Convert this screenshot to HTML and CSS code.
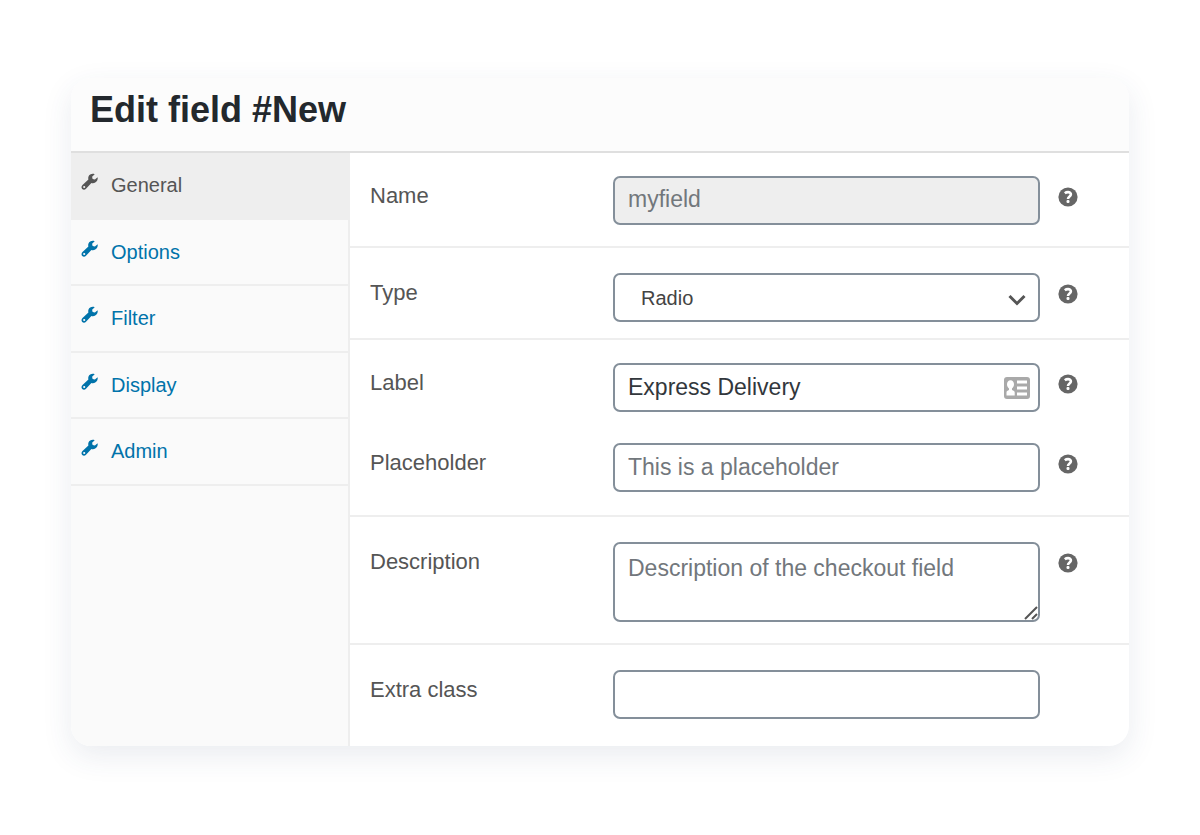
FILE: index.html
```html
<!DOCTYPE html>
<html lang="en">

<head>
    <meta charset="UTF-8">
    <meta name="viewport" content="width=device-width, initial-scale=1.0">
    <title>Edit field #New</title>
    <link rel="stylesheet" href="styles.css">
</head>

<body>
    <!-- shared icons -->
    <svg class="icon-defs" width="0" height="0" aria-hidden="true">
        <symbol id="icon-wrench" viewBox="0 0 18 18">
            <path fill-rule="evenodd" d="M16.600 4.200l-2.700 2.300-2.300-.6-.5-2.200 2.600-2.500C11.200.3 8.400 1.300 7.500 3.600c-.4 1-.4 2-.1 3L1.500 12C.3 13.100.2 14.900 1.200 15.900s2.700 1 3.800-.2l5.400-5.800c1.200.4 2.600.3 3.800-.4 2-1.100 2.900-3.300 2.400-5.300zM3.200 12.900a1.100 1.100 0 1 1 0 2.200 1.100 1.100 0 0 1 0-2.200z" />
        </symbol>
        <symbol id="icon-help" viewBox="0 0 20 20">
            <circle cx="10" cy="10" r="9.600" />
            <path fill="none" stroke="#fff" stroke-width="2.600" d="M6.800 6.200c1-.8 2.100-1.100 3.200-1.100 1.800 0 2.900.8 2.900 2.200 0 2.200-2.900 2.100-2.900 4.700" />
            <rect x="8.500" y="13.100" width="3" height="2.800" rx="1.200" fill="#fff" />
        </symbol>
    </svg>

    <main class="card">
        <header class="card-header">
            <h1>Edit field #New</h1>
        </header>
        <div class="card-body">
            <nav class="tabs">
                <ul>
                    <li class="active"><a href="#general"><svg><use href="#icon-wrench" /></svg>General</a></li>
                    <li><a href="#options"><svg><use href="#icon-wrench" /></svg>Options</a></li>
                    <li><a href="#filter"><svg><use href="#icon-wrench" /></svg>Filter</a></li>
                    <li><a href="#display"><svg><use href="#icon-wrench" /></svg>Display</a></li>
                    <li><a href="#admin"><svg><use href="#icon-wrench" /></svg>Admin</a></li>
                </ul>
            </nav>
            <form class="panel" id="general">
                <div class="group group-first">
                    <div class="field">
                        <label for="name">Name</label>
                        <input type="text" id="name" placeholder="myfield" readonly>
                        <svg class="help"><use href="#icon-help" /></svg>
                    </div>
                </div>
                <div class="group group-short">
                    <div class="field">
                        <label for="type">Type</label>
                        <div class="control">
                            <select id="type">
                                <option>Radio</option>
                                <option>Text</option>
                                <option>Select</option>
                            </select>
                            <svg class="chevron" viewBox="0 0 18 12"><path d="M1.500 2l7.500 7.500L16.500 2" /></svg>
                        </div>
                        <svg class="help"><use href="#icon-help" /></svg>
                    </div>
                </div>
                <div class="group group-pair">
                    <div class="field">
                        <label for="label">Label</label>
                        <div class="control">
                            <input type="text" id="label" value="Express Delivery">
                            <svg class="contact" viewBox="0 0 26 22">
                                <rect width="26" height="22" rx="3" />
                                <path fill="#fff" d="M2.500 18.500v-3c0-1.500 1-2 2.500-2.500v-1.500C3.600 10.500 3 9 3 7.300 3 5 4.300 3.300 6.500 3.300S10 5 10 7.300c0 1.700-.6 3.200-2 4.200V13c1.500.5 2.700 1 2.700 2.500v3zM13 3.500h10v3H13zM13 9.500h10v3H13zM13 15.500h10v3H13z" />
                            </svg>
                        </div>
                        <svg class="help"><use href="#icon-help" /></svg>
                    </div>
                    <div class="field">
                        <label for="placeholder">Placeholder</label>
                        <input type="text" id="placeholder" placeholder="This is a placeholder">
                        <svg class="help"><use href="#icon-help" /></svg>
                    </div>
                </div>
                <div class="group">
                    <div class="field">
                        <label for="description">Description</label>
                        <div class="control">
                            <textarea id="description" placeholder="Description of the checkout field"></textarea>
                            <svg class="grip" viewBox="0 0 14 14"><path d="M1 13L13 1M8 13l5-5" /></svg>
                        </div>
                        <svg class="help"><use href="#icon-help" /></svg>
                    </div>
                </div>
                <div class="group">
                    <div class="field">
                        <label for="extra-class">Extra class</label>
                        <input type="text" id="extra-class">
                    </div>
                </div>
            </form>
        </div>
    </main>
</body>

</html>
```
FILE: styles.css
```css
* {
    box-sizing: border-box;
}

body {
    margin: 0;
    padding: 78px 71px;
    background: #fff;
    color: #555;
    font-family: "Liberation Sans", Arial, sans-serif;
}

.icon-defs {
    position: absolute;
}

.card {
    background: #fff;
    border-radius: 20px;
    box-shadow: 0 10px 30px rgba(50, 70, 110, 0.1);
    overflow: hidden;
}

.card-header {
    padding: 10px 19px 19px;
    background: #fcfcfc;
    border-bottom: 2px solid #dfdfdf;
}

h1 {
    margin: 0;
    color: #23282d;
    font-size: 36px;
    line-height: 44px;
}

.card-body {
    display: flex;
}

/* tabs */
.tabs {
    flex: 0 0 279px;
    background: #fafafa;
    border-right: 2px solid #eee;
}

.tabs ul {
    display: flex;
    flex-direction: column;
    height: 333px;
    margin: 0;
    padding: 0;
    list-style: none;
}

.tabs li {
    flex: 1;
    border-bottom: 2px solid #eee;
}

.tabs a {
    display: flex;
    gap: 12px;
    padding: 20px 10px;
    color: #0073aa;
    font-size: 20px;
    line-height: 24px;
    text-decoration: none;
}

.tabs svg {
    width: 18px;
    height: 18px;
    fill: currentColor;
}

.tabs .active {
    background: #eee;
}

.tabs .active a {
    color: #555;
}

/* form */
.panel {
    flex: 1;
    min-width: 0;
}

.group {
    display: grid;
    gap: 31px;
    padding: 25px 20px 21px;
    border-bottom: 2px solid #eee;
}

.group-first {
    padding-top: 23px;
}

.group-short {
    padding-bottom: 16px;
}

.group-pair {
    padding-top: 23px;
    padding-bottom: 23px;
}

.group:last-child {
    padding-bottom: 27px;
    border-bottom: 0;
}

.field {
    display: grid;
    grid-template-columns: 225px minmax(0, 427px) 20px;
    column-gap: 18px;
    align-items: start;
}

label {
    padding-top: 7px;
    font-size: 22px;
    line-height: 26px;
}

input,
select,
textarea {
    display: block;
    width: 100%;
    height: 49px;
    margin: 0;
    padding: 0 13px;
    background: #fff;
    border: 2px solid #848f9a;
    border-radius: 7px;
    color: #32373c;
    font-family: inherit;
    font-size: 23px;
}

input:read-only {
    padding-bottom: 2px;
    background: #eee;
}

::placeholder {
    color: #72777c;
    opacity: 1;
}

select {
    padding: 0 26px;
    appearance: none;
    color: #444;
    font-size: 20px;
}

textarea {
    height: 80px;
    padding: 10px 13px;
    line-height: 28px;
    resize: none;
}

.control {
    position: relative;
}

.control svg {
    position: absolute;
    pointer-events: none;
}

.chevron,
.grip {
    fill: none;
    stroke: #555;
}

.chevron {
    top: 21px;
    right: 14px;
    width: 18px;
    height: 12px;
    stroke-width: 3;
}

.contact {
    top: 14px;
    right: 10px;
    width: 26px;
    height: 22px;
    fill: #a9a9a9;
}

.grip {
    right: 2px;
    bottom: 2px;
    width: 14px;
    height: 14px;
    stroke-width: 2;
}

.help {
    width: 20px;
    height: 20px;
    margin-top: 11px;
    fill: #666;
}
```
